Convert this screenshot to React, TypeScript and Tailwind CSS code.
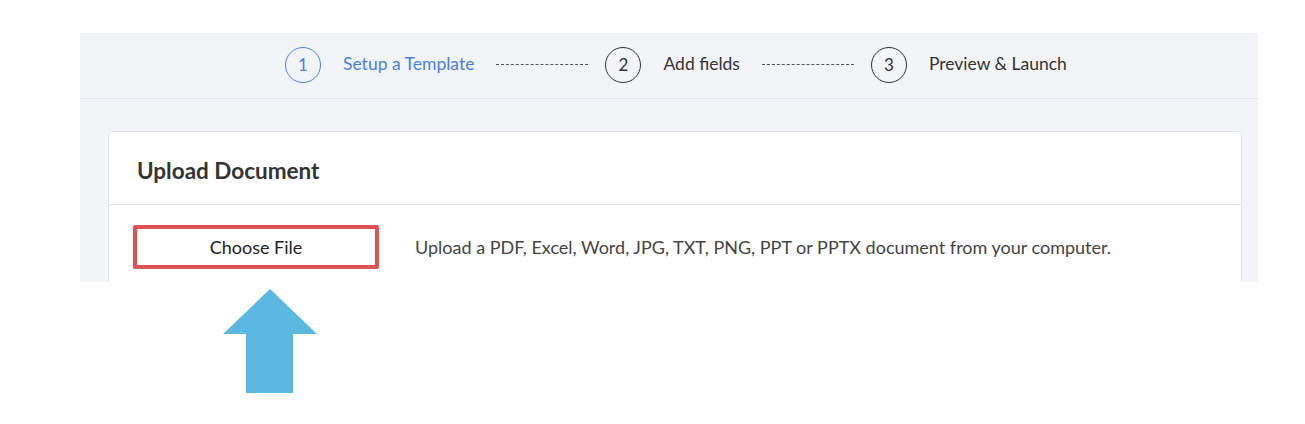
import React from 'react';

const steps = [
  { n: 1, label: 'Setup a Template', active: true },
  { n: 2, label: 'Add fields', active: false },
  { n: 3, label: 'Preview & Launch', active: false },
];

function Dashes() {
  return <div className="w-[92px] border-t border-dashed border-[#555] ml-[22px] mr-[17px]" />;
}

export default function App() {
  return (
    <div className="w-[1305px] h-[424px] bg-white pt-[33px] font-['Lato','Noto_Sans',sans-serif] text-[#333]">
      <div className="ml-[80px] w-[1178px] h-[249px] overflow-hidden bg-[#f3f4f8]">
        {/* stepper */}
        <div className="h-[66px] border-b border-[#e1e3ea] flex items-center pl-[205px] pb-[2px]">
          {steps.map((s, i) => (
            <React.Fragment key={s.n}>
              {i > 0 && <Dashes />}
              <div className="flex items-center">
                <div
                  className={`w-[36px] h-[36px] rounded-full border flex items-center justify-center text-[17px] ${
                    s.active ? 'border-[#4a7ee6] text-[#4a7ee6]' : 'border-[#333] text-[#333]'
                  }`}
                >
                  {s.n}
                </div>
                <span
                  className={`ml-[22px] text-[17.5px] ${s.active ? 'text-[#4a7ee6]' : 'text-[#333]'}`}
                >
                  {s.label}
                </span>
              </div>
            </React.Fragment>
          ))}
        </div>

        {/* card */}
        <div className="mt-[32px] ml-[28px] mr-[16px] bg-white border border-[#e1e3ea] rounded-t-[4px]">
          <div className="h-[73px] border-b border-[#e1e3ea] flex items-center px-[28px] pt-[6px]">
            <h2 className="text-[22.5px] font-bold text-[#333]">Upload Document</h2>
          </div>
          <div className="flex items-center pt-[20px] pb-[40px] px-[24px]">
            <button
              type="button"
              className="w-[246px] h-[44px] border-[4px] border-[#e05252] rounded-[2px] text-[18px] text-[#222] bg-white"
            >
              Choose File
            </button>
            <p className="ml-[36px] text-[18px] text-[#444]">
              Upload a PDF, Excel, Word, JPG, TXT, PNG, PPT or PPTX document from your computer.
            </p>
          </div>
        </div>
      </div>

      {/* annotation arrow */}
      <svg className="ml-[223px] mt-[7px]" width="94" height="105" viewBox="0 0 94 105">
        <polygon points="47,0 94,45 70,45 70,104 23,104 23,45 0,45" fill="#5cb8e0" />
      </svg>
    </div>
  );
}
